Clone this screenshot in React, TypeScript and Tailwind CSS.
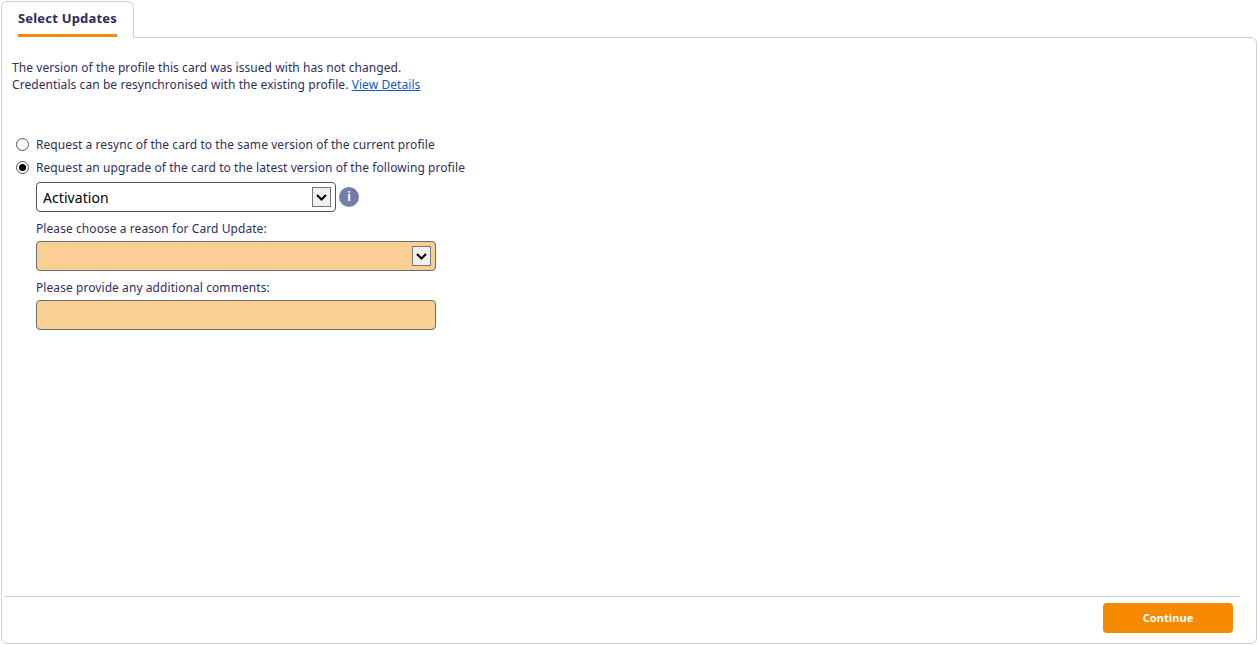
const textColor = "text-[#2f2f5f]";

function Arrow() {
  return (
    <div className="w-[19px] h-[20px] bg-[#f0f0f0] border border-[#767676] flex items-center justify-center">
      <svg width="11" height="7" viewBox="0 0 11 7" fill="none">
        <path d="M1 1l4.5 4.5L10 1" stroke="#000" strokeWidth="2" />
      </svg>
    </div>
  );
}

function Radio({ checked, label }: { checked?: boolean; label: string }) {
  return (
    <div className="flex items-center h-[23px]">
      <div className="w-[13px] h-[13px] ml-[5px] mr-[7px] rounded-full border border-[#555] bg-white flex items-center justify-center">
        {checked && <div className="w-[7px] h-[7px] rounded-full bg-black" />}
      </div>
      <span>{label}</span>
    </div>
  );
}

export default function App() {
  return (
    <div
      className={`w-[1258px] h-[645px] bg-white flex flex-col text-[12px] tracking-[0.07px] ${textColor}`}
      style={{ fontFamily: '"Noto Sans", sans-serif' }}
    >
      <div className="flex h-[37px] pl-[1px] pt-[1px]">
        <div className="relative z-10 w-[133px] h-[37px] bg-white border border-b-0 border-[#d0d0d0] rounded-t-[6px] pl-[16px]">
          <div className="w-[99px] h-[35px] border-b-[3px] border-[#f58a00] flex items-center justify-center text-[13px] font-bold tracking-[0.2px] text-[#2b2b5c] whitespace-nowrap pt-[1px]">
            Select Updates
          </div>
        </div>
      </div>
      <div className="w-[1256px] h-[607px] ml-[1px] border border-[#d0d0d0] rounded-b-[6px] rounded-tr-[6px] flex flex-col">
        <div className="flex-1 px-[10px] pt-[21px]">
          <p className="leading-[17px]">The version of the profile this card was issued with has not changed.</p>
          <p className="leading-[17px]">
            Credentials can be resynchronised with the existing profile.{" "}
            <a className="text-[#0b5cc4] underline">View Details</a>
          </p>
          <div className="mt-[40px] ml-[-1px]">
            <Radio label="Request a resync of the card to the same version of the current profile" />
            <Radio checked label="Request an upgrade of the card to the latest version of the following profile" />
          </div>
          <div className="ml-[24px] mt-[3px] flex flex-col">
            <div className="flex items-center gap-[3px]">
              <div className="w-[300px] h-[30px] border border-[#555] rounded-[4px] bg-white flex items-center justify-between pl-[6px] pr-[4px] text-[14px] text-black">
                <span>Activation</span>
                <Arrow />
              </div>
              <div className="w-[20px] h-[20px] rounded-full bg-[#737da6] flex items-center justify-center text-white text-[12px] font-bold">
                i
              </div>
            </div>
            <label className="mt-[8px] leading-[17px] h-[21px]">Please choose a reason for Card Update:</label>
            <div className="w-[400px] h-[30px] border border-[#6b6b6b] rounded-[4px] bg-[#f9cf95] flex items-center justify-end pr-[4px]">
              <Arrow />
            </div>
            <label className="mt-[8px] leading-[17px] h-[21px]">Please provide any additional comments:</label>
            <div className="w-[400px] h-[30px] border border-[#6b6b6b] rounded-[4px] bg-[#f9cf95]" />
          </div>
        </div>
        <div className="ml-[3px] mr-[16px] border-t border-[#d0d0d0] h-[47px] flex items-start justify-end pt-[6px] pr-[7px]">
          <button className="w-[130px] h-[30px] rounded-[4px] bg-[#f58a00] text-white text-[11px] font-bold flex items-center justify-center">
            Continue
          </button>
        </div>
      </div>
    </div>
  );
}
